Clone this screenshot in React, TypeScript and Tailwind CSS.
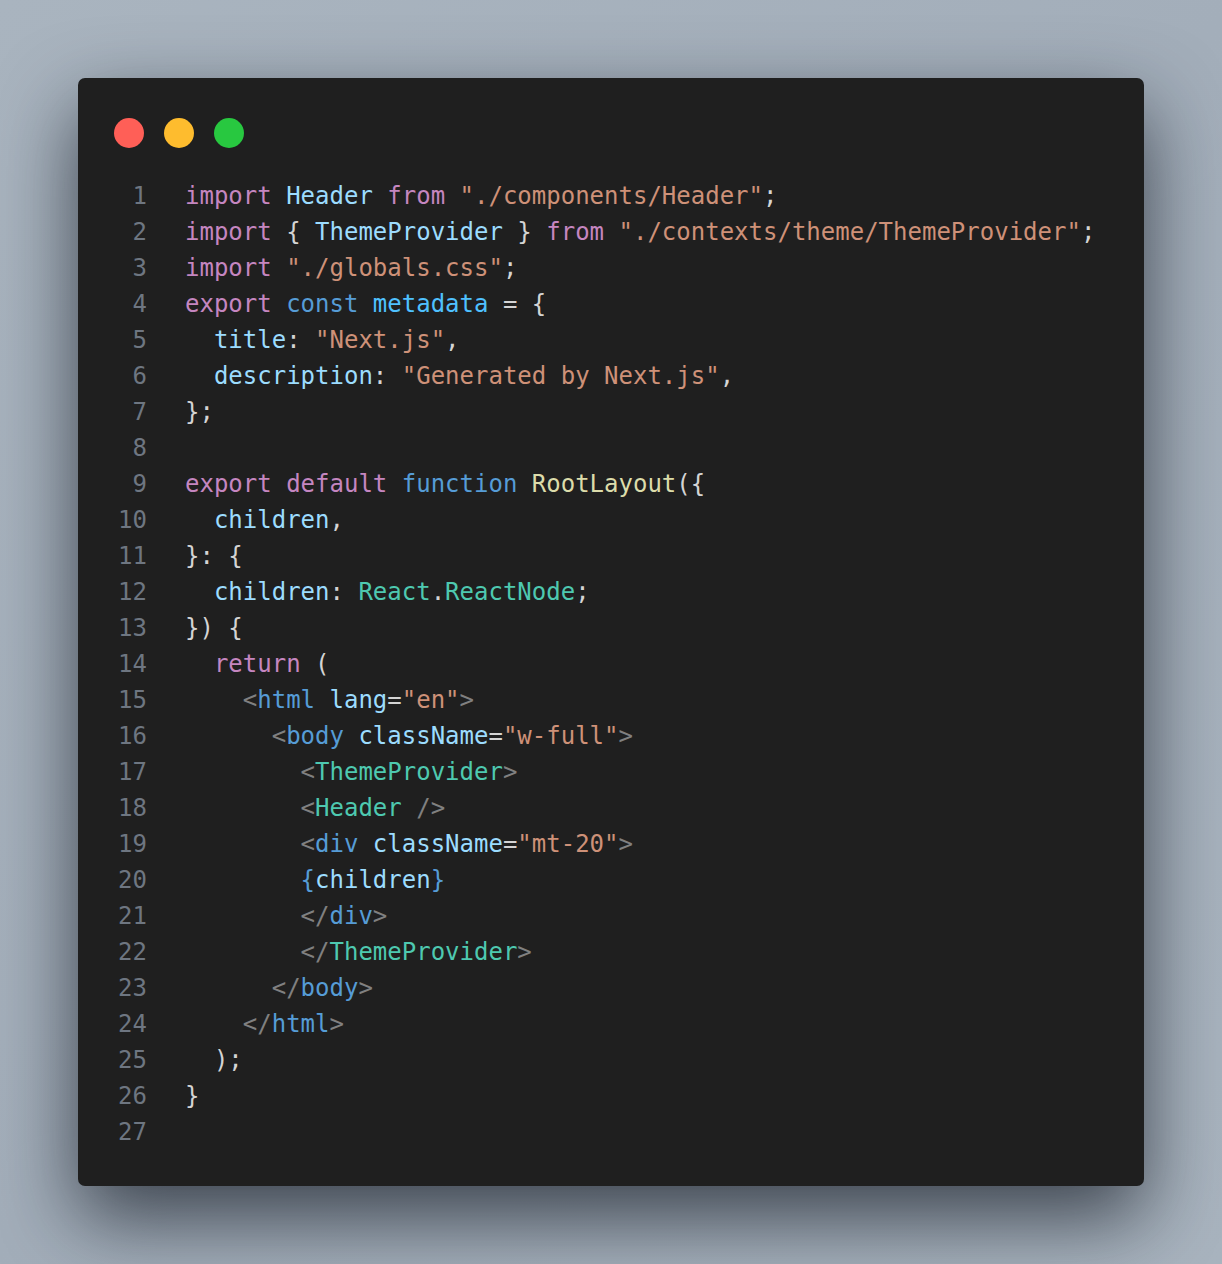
import React from "react";

type Tok = [string, string];

const K = "text-[#c586c0]"; // keyword
const V = "text-[#9cdcfe]"; // variable
const S = "text-[#ce9178]"; // string
const B = "text-[#569cd6]"; // storage / tag
const C = "text-[#4fc1ff]"; // const
const F = "text-[#dcdcaa]"; // function
const T = "text-[#4ec9b0]"; // type / component
const P = "text-[#d4d4d4]"; // punctuation
const G = "text-[#808080]"; // tag brackets

const lines: Tok[][] = [
  [[K, "import"], [P, " "], [V, "Header"], [P, " "], [K, "from"], [P, " "], [S, '"./components/Header"'], [P, ";"]],
  [[K, "import"], [P, " { "], [V, "ThemeProvider"], [P, " } "], [K, "from"], [P, " "], [S, '"./contexts/theme/ThemeProvider"'], [P, ";"]],
  [[K, "import"], [P, " "], [S, '"./globals.css"'], [P, ";"]],
  [[K, "export"], [P, " "], [B, "const"], [P, " "], [C, "metadata"], [P, " = {"]],
  [[P, "  "], [V, "title"], [P, ": "], [S, '"Next.js"'], [P, ","]],
  [[P, "  "], [V, "description"], [P, ": "], [S, '"Generated by Next.js"'], [P, ","]],
  [[P, "};"]],
  [],
  [[K, "export"], [P, " "], [K, "default"], [P, " "], [B, "function"], [P, " "], [F, "RootLayout"], [P, "({"]],
  [[P, "  "], [V, "children"], [P, ","]],
  [[P, "}: {"]],
  [[P, "  "], [V, "children"], [P, ": "], [T, "React"], [P, "."], [T, "ReactNode"], [P, ";"]],
  [[P, "}) {"]],
  [[P, "  "], [K, "return"], [P, " ("]],
  [[P, "    "], [G, "<"], [B, "html"], [P, " "], [V, "lang"], [P, "="], [S, '"en"'], [G, ">"]],
  [[P, "      "], [G, "<"], [B, "body"], [P, " "], [V, "className"], [P, "="], [S, '"w-full"'], [G, ">"]],
  [[P, "        "], [G, "<"], [T, "ThemeProvider"], [G, ">"]],
  [[P, "        "], [G, "<"], [T, "Header"], [P, " "], [G, "/>"]],
  [[P, "        "], [G, "<"], [B, "div"], [P, " "], [V, "className"], [P, "="], [S, '"mt-20"'], [G, ">"]],
  [[P, "        "], [B, "{"], [V, "children"], [B, "}"]],
  [[P, "        "], [G, "</"], [B, "div"], [G, ">"]],
  [[P, "        "], [G, "</"], [T, "ThemeProvider"], [G, ">"]],
  [[P, "      "], [G, "</"], [B, "body"], [G, ">"]],
  [[P, "    "], [G, "</"], [B, "html"], [G, ">"]],
  [[P, "  );"]],
  [[P, "}"]],
  [],
];

export default function App() {
  return (
    <div className="min-h-[1264px] w-full bg-[linear-gradient(135deg,#a9b4bf_0%,#a3aeba_50%,#a9b4bf_100%)] pt-[78px] pb-[78px]">
      <div className="mx-auto flex w-[1066px] flex-col rounded-[7px] bg-[#1f1f1f] pt-[40px] pb-[36px] shadow-[0_32px_80px_rgba(15,22,32,0.7)]">
        <div className="flex h-[30px] items-center gap-[20px] pl-[36px]">
          <span className="h-[30px] w-[30px] rounded-full bg-[#ff5f57]" />
          <span className="h-[30px] w-[30px] rounded-full bg-[#febc2e]" />
          <span className="h-[30px] w-[30px] rounded-full bg-[#28c840]" />
        </div>
        <div
          className="mt-[30px] flex flex-col pl-[39px] text-[24px] leading-[36px]"
          style={{ fontFamily: '"DejaVu Sans Mono", "Liberation Mono", monospace' }}
        >
          {lines.map((toks, i) => (
            <div key={i} className="flex h-[36px]">
              <span className="w-[30px] shrink-0 text-right text-[#6e7681]">{i + 1}</span>
              <span className="ml-[38px] whitespace-pre">
                {toks.map(([cls, txt], j) => (
                  <span key={j} className={cls}>
                    {txt}
                  </span>
                ))}
              </span>
            </div>
          ))}
        </div>
      </div>
    </div>
  );
}
